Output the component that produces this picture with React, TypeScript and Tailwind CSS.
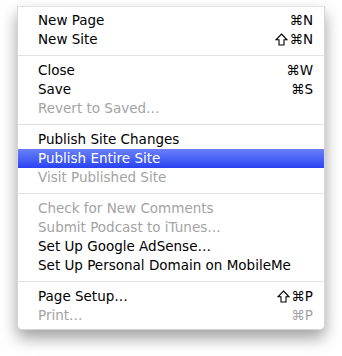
import React from 'react';

type Item =
  | { kind: 'sep' }
  | { kind: 'item'; label: string; shortcut?: string; shift?: boolean; disabled?: boolean; selected?: boolean };

const items: Item[] = [
  { kind: 'item', label: 'New Page', shortcut: '⌘N' },
  { kind: 'item', label: 'New Site', shortcut: '⌘N', shift: true },
  { kind: 'sep' },
  { kind: 'item', label: 'Close', shortcut: '⌘W' },
  { kind: 'item', label: 'Save', shortcut: '⌘S' },
  { kind: 'item', label: 'Revert to Saved…', disabled: true },
  { kind: 'sep' },
  { kind: 'item', label: 'Publish Site Changes' },
  { kind: 'item', label: 'Publish Entire Site', selected: true },
  { kind: 'item', label: 'Visit Published Site', disabled: true },
  { kind: 'sep' },
  { kind: 'item', label: 'Check for New Comments', disabled: true },
  { kind: 'item', label: 'Submit Podcast to iTunes…', disabled: true },
  { kind: 'item', label: 'Set Up Google AdSense…' },
  { kind: 'item', label: 'Set Up Personal Domain on MobileMe' },
  { kind: 'sep' },
  { kind: 'item', label: 'Page Setup…', shortcut: '⌘P', shift: true },
  { kind: 'item', label: 'Print…', shortcut: '⌘P', disabled: true },
];

// outlined shift arrow, as drawn in the old Aqua menus
const ShiftIcon = () => (
  <svg width="13" height="13" viewBox="0 0 13 13" className="mr-[1px]">
    <path d="M6.5 1 L12 6.8 H9 V12 H4 V6.8 H1 Z" fill="none" stroke="currentColor" strokeWidth="1.1" strokeLinejoin="miter" />
  </svg>
);

const App: React.FC = () => {
  return (
    <div className="w-[342px] h-[356px] bg-white pt-[6px] pl-[17px]" style={{ fontFamily: '"DejaVu Sans", sans-serif' }}>
      <div className="w-[308px] bg-white border border-[#d6d6d6] border-t-[#e4e4e4] rounded-b-[5px] py-[4px] shadow-[0_8px_16px_rgba(0,0,0,0.38)]">
        {items.map((item, i) =>
          item.kind === 'sep' ? (
            <div key={i} className="h-[12px] flex items-center">
              <div className="h-px w-full bg-[#e2e2e2]" />
            </div>
          ) : (
            <div
              key={i}
              className={
                'h-[19px] flex items-center justify-between pl-[20px] pr-[11px] text-[13.5px] leading-none ' +
                (item.selected
                  ? 'bg-gradient-to-b from-[#6b7ff8] to-[#2a40f2] text-white'
                  : item.disabled
                  ? 'text-[#a3a3a3]'
                  : 'text-black')
              }
            >
              <span>{item.label}</span>
              {item.shortcut && (
                <span className="flex items-center">
                  {item.shift && <ShiftIcon />}
                  <span>{item.shortcut}</span>
                </span>
              )}
            </div>
          )
        )}
      </div>
    </div>
  );
};

export default App;
